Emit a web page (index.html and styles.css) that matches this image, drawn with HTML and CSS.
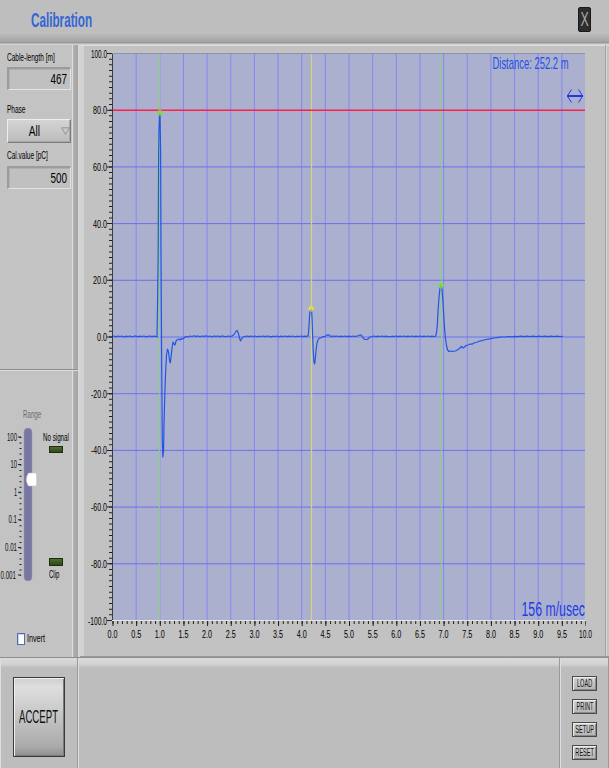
FILE: index.html
```html
<!DOCTYPE html>
<html>
<head>
<meta charset="utf-8">
<title>Calibration</title>
<link rel="stylesheet" href="styles.css">
</head>
<body>
<div class="app">
  <header class="titlebar">
    <span class="title">Calibration</span>
    <button class="close"><span>X</span></button>
  </header>

  <div class="main">
    <aside class="side">
      <section class="params">
        <div class="lbl">Cable-length [m]</div>
        <div class="numbox"><span>467</span></div>
        <div class="lbl lbl-phase">Phase</div>
        <div class="dropdown">
          <span class="dd-val"><span>All</span></span>
          <svg class="dd-arrow" width="9" height="8" viewBox="0 0 9 8"><path d="M0.6,0.8 H8.4 L4.5,7.4 Z" fill="none" stroke="#8e8e8e" stroke-width="0.9"/></svg>
        </div>
        <div class="lbl lbl-cal">Cal.value [pC]</div>
        <div class="numbox numbox-cal"><span>500</span></div>
      </section>
      <section class="range">
        <div class="range-title">Range</div>
        <div class="range-body">
          <svg class="slider" width="42" height="160" viewBox="0 425 42 160">
            <g class="scale-text" font-size="10.5">
              <text x="17" y="441" text-anchor="end" textLength="10" lengthAdjust="spacingAndGlyphs">100</text>
              <text x="17" y="468" text-anchor="end" textLength="6.5" lengthAdjust="spacingAndGlyphs">10</text>
              <text x="17" y="496" text-anchor="end" textLength="3" lengthAdjust="spacingAndGlyphs">1</text>
              <text x="17" y="523" text-anchor="end" textLength="8.5" lengthAdjust="spacingAndGlyphs">0.1</text>
              <text x="17" y="551" text-anchor="end" textLength="12" lengthAdjust="spacingAndGlyphs">0.01</text>
              <text x="16" y="579" text-anchor="end" textLength="15.5" lengthAdjust="spacingAndGlyphs">0.001</text>
            </g>
            <line x1="20.5" y1="437" x2="20.5" y2="575.5" stroke="#202020" stroke-width="2" stroke-dasharray="1 4.52"/>
            <line x1="19.5" y1="436.5" x2="19.5" y2="576" stroke="#202020" stroke-width="3" stroke-dasharray="1 26.6"/>
            <rect x="24" y="428" width="8" height="153" rx="4" fill="#7676a0" stroke="#9a9ab8" stroke-width="0.6"/>
            <path d="M28.5,473 H35 Q36.5,473 36.5,474.5 V484.5 Q36.5,486 35,486 H28.5 Q24.2,479.5 28.5,473 Z" fill="#ffffff" stroke="#c8c8c8" stroke-width="0.6"/>
          </svg>
          <div class="leds">
            <div class="led-lbl">No signal</div>
            <div class="led"></div>
            <div class="led led-clip"></div>
            <div class="led-lbl led-lbl-clip">Clip</div>
          </div>
        </div>
        <label class="invert"><span class="chk"></span><span class="chk-lbl">Invert</span></label>
      </section>
    </aside>

    <div class="chart">
      <svg width="529" height="612" viewBox="80 45 529 612">
        <rect x="80" y="45" width="529" height="612" fill="#c2c2c2"/>
        <rect x="80" y="45" width="4" height="612" fill="#d3d3d3"/>
        <line x1="80" y1="45.5" x2="609" y2="45.5" stroke="#dedede"/>
        <line x1="605.5" y1="45" x2="605.5" y2="657" stroke="#a2a2a2"/>
        <line x1="606.5" y1="45" x2="606.5" y2="657" stroke="#d6d6d6"/>
        <line x1="80" y1="656.5" x2="609" y2="656.5" stroke="#9a9a9a"/>

        <rect x="112" y="53" width="473" height="567" fill="#abb0cf"/>
        <g stroke="#8686f2" stroke-width="1">
          <line x1="136.15" y1="53" x2="136.15" y2="620"/>
          <line x1="159.8" y1="53" x2="159.8" y2="620"/>
          <line x1="183.45" y1="53" x2="183.45" y2="620"/>
          <line x1="207.1" y1="53" x2="207.1" y2="620"/>
          <line x1="230.75" y1="53" x2="230.75" y2="620"/>
          <line x1="254.4" y1="53" x2="254.4" y2="620"/>
          <line x1="278.05" y1="53" x2="278.05" y2="620"/>
          <line x1="301.7" y1="53" x2="301.7" y2="620"/>
          <line x1="325.35" y1="53" x2="325.35" y2="620"/>
          <line x1="349" y1="53" x2="349" y2="620"/>
          <line x1="372.65" y1="53" x2="372.65" y2="620"/>
          <line x1="396.3" y1="53" x2="396.3" y2="620"/>
          <line x1="419.95" y1="53" x2="419.95" y2="620"/>
          <line x1="443.6" y1="53" x2="443.6" y2="620"/>
          <line x1="467.25" y1="53" x2="467.25" y2="620"/>
          <line x1="490.9" y1="53" x2="490.9" y2="620"/>
          <line x1="514.55" y1="53" x2="514.55" y2="620"/>
          <line x1="538.2" y1="53" x2="538.2" y2="620"/>
          <line x1="561.85" y1="53" x2="561.85" y2="620"/>
        </g>
        <g stroke="#6c70f0" stroke-width="1">
          <line x1="112" y1="166.9" x2="585" y2="166.9"/>
          <line x1="112" y1="223.6" x2="585" y2="223.6"/>
          <line x1="112" y1="280.3" x2="585" y2="280.3"/>
          <line x1="112" y1="337" x2="585" y2="337"/>
          <line x1="112" y1="393.7" x2="585" y2="393.7"/>
          <line x1="112" y1="450.4" x2="585" y2="450.4"/>
          <line x1="112" y1="507.1" x2="585" y2="507.1"/>
          <line x1="112" y1="563.8" x2="585" y2="563.8"/>
        </g>
        <line x1="159.5" y1="53" x2="159.5" y2="620" stroke="#8ad07a" stroke-width="1"/>
        <line x1="311.5" y1="53" x2="311.5" y2="620" stroke="#d4d480" stroke-width="1.2"/>
        <line x1="441.5" y1="53" x2="441.5" y2="620" stroke="#8ad07a" stroke-width="1"/>
        <line x1="112" y1="110.2" x2="585" y2="110.2" stroke="#ff1f4a" stroke-width="1.6"/>

        <polyline fill="none" stroke="#2256e2" stroke-width="1.2" stroke-linejoin="round" points="112,336.5 114,336 116,336.8 118,336 120,336.5 122,336 124,337 126,336.2 128,336.5 130,336 132,336.8 134,336.2 136,336 138,336.7 140,336.2 142,336.5 144,336 146,336.8 148,336.3 150,336 152,336.6 154,336.2 156,336.5 157,336.8 157.6,300 158.2,250 158.6,160 159,128 159.5,115 160,113 160.6,150 161,250 161.4,320 161.8,380 162.3,440 162.8,457 163.5,452 164,425 164.8,395 165.6,372 166.5,355 167.5,349 168.5,352 169.5,360 170.3,363 171.2,356 172,348 173,342 174,344 175,345 176,341 177,340 178.5,339 180,340 181.5,338.5 183,339 184.5,337.5 186,336.5 188,337 190,336 192,336.5 194,335.8 196,336.4 198,336 200,336.6 202,336 204,336.3 206,335.8 208,336.5 210,336 212,336.7 214,336 216,336.4 218,336 220,336.6 222,336 224,336.2 226,336.8 228,336 230,336.4 232,336.1 233.5,335 235,333 236.5,330.5 237.5,331 238.5,334 239.5,338 240.5,341 241.5,339 243,337 245,336.5 247,336 249,336.6 251,336 253,336.5 255,336 257,336.8 259,336.2 261,336.5 263,336 265,336.6 267,336 269,336.4 271,336.9 273,336.2 275,336.5 277,336 279,336.7 281,336.1 283,336.5 285,336 287,336.6 289,336.2 291,336.5 293,336 295,336.8 297,336.2 299,336.5 301,336 303,336.6 305,336.2 307,336.5 308.3,335 309,326 309.6,315 310.3,309 311,308 311.7,312 312.2,322 312.7,338 313.3,352 314,362 314.7,364 315.4,358 316.2,349 317,343 318,340 319,338.5 320.5,338 322,337.3 323.5,336.6 325,336.5 326.5,335.5 328,334.5 329.5,335.5 331,336.6 333,336 335,336.4 337,336 339,336.7 341,336.2 343,336.5 345,336 347,336.6 349,336.1 351,336.5 353,336 355,336.5 357,336 359,335.5 360.5,334.8 362,336 363.5,338.5 365,339.5 367,339.5 368.5,338.5 370,337 372,336.5 374,336 376,336.6 378,336.2 380,336.5 382,336 384,336.6 386,336.1 388,336.5 390,336.8 392,336.2 394,336.5 396,336 398,336.6 400,336.1 402,336.5 404,336 406,336.6 408,336.2 410,336.5 412,336 414,336.6 416,336.1 418,336.5 420,336 422,336.6 424,336.2 426,336.5 428,336 430,336.6 432,336.1 434,336.5 435.5,336.3 436.5,333 437.3,325 438,312 438.8,300 439.6,291 440.4,286 441,285 441.7,287 442.4,294 443.2,306 444,320 444.8,332 445.7,340 446.6,346 447.6,350 449,351.5 451,351 453,351.5 455,351 456.5,350.5 458,349.5 460,348 461.5,346.5 463,348 464.5,347 466,345.5 468,345 470,344 472,344.2 474,343 476,342.5 478,341.8 480,341 482,340.6 484,340 486,339.5 488,339.2 490,338.8 492,338.3 494,338 497,337.6 500,337.2 503,337 506,336.8 509,336.5 512,336.8 515,336.3 518,336.7 521,336.2 524,336.6 527,336.1 530,336.5 533,336.2 536,336.6 539,336.1 542,336.5 545,336.2 548,336.6 551,336.1 554,336.5 557,336.2 560,336.5 563,336.3"/>

        <g fill="none" stroke-width="1">
          <g stroke="#7ee23a"><path d="M156.5,112.5 H163.5 M160,109 V116"/><rect x="158.5" y="111" width="3" height="3"/></g>
          <g stroke="#e6e03a"><path d="M307.5,308.5 H314.5 M311,305 V312"/><rect x="309.5" y="307" width="3" height="3"/></g>
          <g stroke="#7ee23a"><path d="M437.5,285.5 H444.5 M441,282 V289"/><rect x="439.5" y="284" width="3" height="3"/></g>
        </g>

        <line x1="112.5" y1="53" x2="112.5" y2="620.5" stroke="#3c3c3c"/>
        <line x1="112" y1="53.5" x2="585" y2="53.5" stroke="#8e92b0"/>
        <line x1="112" y1="620.5" x2="586" y2="620.5" stroke="#e6e6e6"/>
        <line x1="110.5" y1="53" x2="110.5" y2="621" stroke="#202020" stroke-width="3" stroke-dasharray="1 4.67"/>
        <line x1="109.5" y1="53" x2="109.5" y2="621" stroke="#202020" stroke-width="5" stroke-dasharray="1 55.7"/>
        <line x1="112.5" y1="622.5" x2="586" y2="622.5" stroke="#202020" stroke-width="3" stroke-dasharray="1 3.73"/>
        <line x1="112.5" y1="623.5" x2="586" y2="623.5" stroke="#202020" stroke-width="5" stroke-dasharray="1 22.65"/>

        <g class="axis-text" font-size="10.5" text-anchor="end">
          <text x="107" y="57.5" textLength="16" lengthAdjust="spacingAndGlyphs">100.0</text>
          <text x="107" y="114.2" textLength="14" lengthAdjust="spacingAndGlyphs">80.0</text>
          <text x="107" y="170.9" textLength="14" lengthAdjust="spacingAndGlyphs">60.0</text>
          <text x="107" y="227.6" textLength="14" lengthAdjust="spacingAndGlyphs">40.0</text>
          <text x="107" y="284.3" textLength="14" lengthAdjust="spacingAndGlyphs">20.0</text>
          <text x="107" y="341" textLength="10" lengthAdjust="spacingAndGlyphs">0.0</text>
          <text x="107" y="397.7" textLength="16" lengthAdjust="spacingAndGlyphs">-20.0</text>
          <text x="107" y="454.4" textLength="16" lengthAdjust="spacingAndGlyphs">-40.0</text>
          <text x="107" y="511.1" textLength="16" lengthAdjust="spacingAndGlyphs">-60.0</text>
          <text x="107" y="567.8" textLength="16" lengthAdjust="spacingAndGlyphs">-80.0</text>
          <text x="107" y="624.5" textLength="19" lengthAdjust="spacingAndGlyphs">-100.0</text>
        </g>
        <g class="axis-text" font-size="10.5" text-anchor="middle">
          <text x="112.5" y="638" textLength="10" lengthAdjust="spacingAndGlyphs">0.0</text>
          <text x="136.2" y="638" textLength="10" lengthAdjust="spacingAndGlyphs">0.5</text>
          <text x="159.8" y="638" textLength="10" lengthAdjust="spacingAndGlyphs">1.0</text>
          <text x="183.5" y="638" textLength="10" lengthAdjust="spacingAndGlyphs">1.5</text>
          <text x="207.1" y="638" textLength="10" lengthAdjust="spacingAndGlyphs">2.0</text>
          <text x="230.8" y="638" textLength="10" lengthAdjust="spacingAndGlyphs">2.5</text>
          <text x="254.4" y="638" textLength="10" lengthAdjust="spacingAndGlyphs">3.0</text>
          <text x="278.1" y="638" textLength="10" lengthAdjust="spacingAndGlyphs">3.5</text>
          <text x="301.7" y="638" textLength="10" lengthAdjust="spacingAndGlyphs">4.0</text>
          <text x="325.4" y="638" textLength="10" lengthAdjust="spacingAndGlyphs">4.5</text>
          <text x="349" y="638" textLength="10" lengthAdjust="spacingAndGlyphs">5.0</text>
          <text x="372.7" y="638" textLength="10" lengthAdjust="spacingAndGlyphs">5.5</text>
          <text x="396.3" y="638" textLength="10" lengthAdjust="spacingAndGlyphs">6.0</text>
          <text x="420" y="638" textLength="10" lengthAdjust="spacingAndGlyphs">6.5</text>
          <text x="443.6" y="638" textLength="10" lengthAdjust="spacingAndGlyphs">7.0</text>
          <text x="467.3" y="638" textLength="10" lengthAdjust="spacingAndGlyphs">7.5</text>
          <text x="490.9" y="638" textLength="10" lengthAdjust="spacingAndGlyphs">8.0</text>
          <text x="514.6" y="638" textLength="10" lengthAdjust="spacingAndGlyphs">8.5</text>
          <text x="538.2" y="638" textLength="10" lengthAdjust="spacingAndGlyphs">9.0</text>
          <text x="561.9" y="638" textLength="10" lengthAdjust="spacingAndGlyphs">9.5</text>
          <text x="585.5" y="638" textLength="13" lengthAdjust="spacingAndGlyphs">10.0</text>
        </g>

        <text class="readout" transform="translate(492.5 69.3) scale(0.59 1)" x="0" y="0" font-size="16" textLength="128.8" lengthAdjust="spacingAndGlyphs">Distance: 252.2 m</text>
        <g stroke="#2238e6" fill="none">
          <path d="M567,96 H583" stroke-width="2"/>
          <path d="M571.5,89.5 L567.3,96 L571.5,102.5 M578.5,89.5 L582.7,96 L578.5,102.5" stroke-width="1"/>
        </g>
        <text class="speed" transform="translate(521.5 616) scale(0.63 1)" x="0" y="0" font-size="19.5" textLength="100.8" lengthAdjust="spacingAndGlyphs">156 m/usec</text>
      </svg>
    </div>
  </div>

  <footer class="bottom">
    <div class="b-left"><button class="accept"><span>ACCEPT</span></button></div>
    <div class="b-mid"></div>
    <div class="b-right">
      <button class="sbtn"><span>LOAD</span></button>
      <button class="sbtn"><span>PRINT</span></button>
      <button class="sbtn"><span>SETUP</span></button>
      <button class="sbtn"><span>RESET</span></button>
    </div>
  </footer>
</div>
</body>
</html>
```
FILE: styles.css
```css
* { box-sizing: border-box; }
html, body { margin: 0; padding: 0; }
body {
  width: 609px;
  height: 768px;
  overflow: hidden;
  background: #bfbfbf;
  font-family: "Liberation Sans", Arial, sans-serif;
  color: #000;
}
button { font-family: inherit; padding: 0; margin: 0; cursor: default; }
svg { display: block; }
svg text { font-family: "Liberation Sans", Arial, sans-serif; }

.app {
  width: 609px;
  height: 768px;
  display: flex;
  flex-direction: column;
  background: #bfbfbf;
}

/* title bar */
.titlebar {
  flex: none;
  height: 45px;
  display: flex;
  justify-content: space-between;
  align-items: flex-start;
  padding: 0 18px 0 31px;
  background: linear-gradient(to bottom, #bebebe 0, #bebebe 33px, #a3a3a3 42px, #8f8f8f 43px, #dcdcdc 44px, #c8c8c8 45px);
}
.title {
  margin-top: 9px;
  font-weight: bold;
  font-size: 20px;
  line-height: 23px;
  color: #3566d4;
  display: inline-block;
  transform: scaleX(0.585);
  transform-origin: left center;
}
.close {
  margin-top: 7px;
  width: 13px;
  height: 25px;
  border: 1px solid #1a1a1a;
  border-radius: 2px;
  background: #2e2e2e;
  color: #a8a8a8;
  font-size: 20px;
  line-height: 22px;
  text-align: center;
  display: flex;
  justify-content: center;
  overflow: visible;
}
.close span { display: inline-block; transform: scaleX(0.62); }

/* main */
.main {
  flex: none;
  height: 612px;
  display: flex;
}
.side {
  flex: none;
  width: 80px;
  display: flex;
  flex-direction: column;
  background: linear-gradient(to right, #c3c3c3 0, #c3c3c3 72px, #dedede 72px, #dedede 73px, #b2b2b2 73px, #a4a4a4 78px, #d6d6d6 78px, #d6d6d6 80px);
}
.params {
  height: 323px;
  width: 78px;
  padding: 7px 0 0 7px;
  display: flex;
  flex-direction: column;
  align-items: flex-start;
}
.lbl {
  font-size: 10px;
  line-height: 12px;
  height: 12px;
  white-space: nowrap;
  display: inline-block;
  transform: scaleX(0.65);
  transform-origin: left center;
}
.numbox {
  margin-top: 3px;
  width: 64px;
  height: 23px;
  border-style: solid;
  border-width: 2px 1px 1px 2px;
  border-color: #9c9c9c #e2e2e2 #e2e2e2 #9c9c9c;
  background: #c0c0c0;
  box-shadow: inset 1px 1px 0 #b0b0b0;
  font-size: 15px;
  line-height: 20px;
  text-align: right;
  padding-right: 3px;
}
.numbox span {
  display: inline-block;
  transform: scaleX(0.66);
  transform-origin: right center;
}
.lbl-phase { margin-top: 14px; }
.dropdown {
  margin-top: 3px;
  width: 64px;
  height: 24px;
  border: 1px solid;
  border-color: #eeeeee #7c7c7c #7c7c7c #eeeeee;
  background: linear-gradient(to bottom, #d4d4d4, #bcbcbc);
  box-shadow: inset -1px -1px 0 #a8a8a8;
  display: flex;
  align-items: center;
}
.dd-val {
  width: 52px;
  text-align: center;
  font-size: 15px;
  line-height: 20px;
  padding-left: 1px;
}
.dd-val span {
  display: inline-block;
  transform: scaleX(0.68);
}
.dd-arrow {
  flex: none;
  margin-left: 1px;
}
.lbl-cal { margin-top: 7px; }
.numbox-cal { margin-top: 4px; }

.range {
  flex: 1;
  width: 78px;
  border-top: 1px solid #8e8e8e;
  box-shadow: inset 0 1px 0 #dcdcdc;
  margin-top: 1px;
  padding-top: 39px;
  display: flex;
  flex-direction: column;
  align-items: flex-start;
}
.range-title {
  font-size: 10px;
  line-height: 12px;
  height: 12px;
  color: #6c6c6c;
  margin-left: 23px;
  white-space: nowrap;
  transform: scaleX(0.62);
  transform-origin: left center;
}
.range-body {
  display: flex;
  margin-top: 4px;
  height: 160px;
}
.slider { flex: none; }
.slider text { fill: #101010; }
.leds {
  flex: none;
  width: 30px;
  margin-left: 1px;
  padding-top: 7px;
  display: flex;
  flex-direction: column;
  align-items: flex-start;
}
.led-lbl {
  font-size: 10px;
  line-height: 12px;
  height: 12px;
  white-space: nowrap;
  transform: scaleX(0.62);
  transform-origin: left center;
}
.led {
  margin: 2px 0 0 6px;
  width: 14px;
  height: 7px;
  border: 1px solid #1f2c10;
  background: linear-gradient(to bottom, #4e6e32, #2c4818);
}
.led-clip { margin-top: 105px; height: 8px; }
.led-lbl-clip { margin: 3px 0 0 6px; transform: scaleX(0.6); }

.invert {
  display: flex;
  align-items: center;
  margin: 47px 0 0 17px;
  height: 13px;
}
.chk {
  flex: none;
  width: 8px;
  height: 12px;
  border: 1px solid #5070b8;
  background: #ffffff;
  box-shadow: inset 1px 1px 0 #c8d0e8;
}
.chk-lbl {
  margin-left: 2px;
  font-size: 10px;
  line-height: 12px;
  display: inline-block;
  white-space: nowrap;
  transform: scaleX(0.72);
  transform-origin: left center;
}

.chart {
  flex: none;
  width: 529px;
  height: 612px;
}
.axis-text text { fill: #000; }
.readout { fill: #2250e6; }
.speed { fill: #1b3ee2; }

/* bottom */
.bottom {
  flex: none;
  height: 111px;
  display: flex;
  border-top: 1px solid #8e8e8e;
  background: #bdbdbd;
}
.b-left, .b-mid, .b-right {
  height: 100%;
  background: linear-gradient(to bottom, #dadada 0, #d2d2d2 6px, #bdbdbd 10px, #bdbdbd 100%);
  border-left: 1px solid #dedede;
  border-right: 1px solid #9a9a9a;
}
.b-left {
  flex: none;
  width: 78px;
  padding: 19px 0 0 12px;
}
.b-mid { flex: 1; }
.b-right {
  flex: none;
  width: 49px;
  padding: 18px 0 0 11px;
  display: flex;
  flex-direction: column;
  gap: 8px;
}
.accept {
  width: 52px;
  height: 80px;
  border: 1px solid #3a3a3a;
  background: linear-gradient(to bottom, #cfcfcf 0, #dedede 12%, #c4c4c4 50%, #aaaaaa 88%, #8e8e8e 100%);
  box-shadow: inset 1px 1px 0 #f0f0f0, inset -1px -1px 0 #7a7a7a;
  font-size: 18.5px;
  color: #111;
  display: flex;
  align-items: center;
  justify-content: center;
}
.accept span {
  display: inline-block;
  white-space: nowrap;
  transform: scaleX(0.52);
}
.sbtn {
  width: 25px;
  height: 15px;
  border: 1px solid #4a4a4a;
  background: linear-gradient(to bottom, #d4d4d4, #b4b4b4);
  box-shadow: inset 1px 1px 0 #eeeeee, inset -1px -1px 0 #8a8a8a;
  font-size: 10px;
  line-height: 12px;
  color: #111;
  display: flex;
  align-items: center;
  justify-content: center;
  overflow: visible;
}
.sbtn span {
  display: inline-block;
  white-space: nowrap;
  transform: scaleX(0.56);
}
```
